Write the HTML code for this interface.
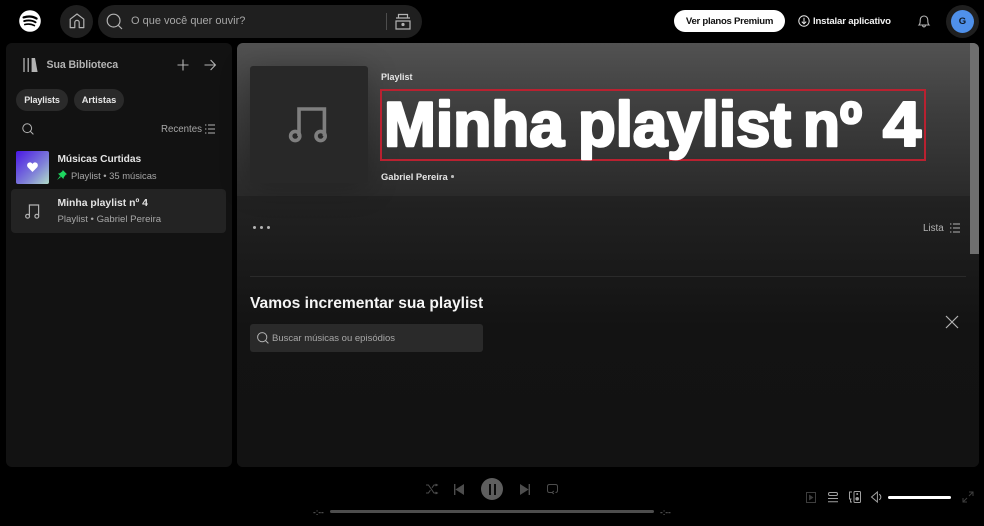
<!DOCTYPE html>
<html lang="pt-BR"><head><meta charset="utf-8"><title>Spotify</title>
<style>
html,body{margin:0;padding:0;background:#000;}
body{width:984px;height:526px;position:relative;overflow:hidden;font-family:"Liberation Sans",sans-serif;color:#fff;}
.a{position:absolute;}
.t{position:absolute;white-space:nowrap;line-height:1;}
svg{position:absolute;overflow:visible;}
</style></head><body>

<!-- top bar -->
<svg style="left:19px;top:10px" width="22" height="22" viewBox="0 0 22 22"><circle cx="11" cy="11" r="10.8" fill="#fff"/><path d="M4.6 7.4C9 6.1 14 6.4 17.6 8.6" stroke="#000" stroke-width="2.2" fill="none" stroke-linecap="round"/><path d="M5.2 11.1C9 10.1 13.4 10.4 16.6 12.3" stroke="#000" stroke-width="1.9" fill="none" stroke-linecap="round"/><path d="M5.8 14.5C9 13.7 12.6 14 15.4 15.6" stroke="#000" stroke-width="1.6" fill="none" stroke-linecap="round"/></svg>
<div class="a" style="left:60px;top:5px;width:33px;height:33px;border-radius:50%;background:#1f1f1f"></div>
<svg style="left:69px;top:13px" width="16" height="16" viewBox="0 0 16 16" fill="none" stroke="#b3b3b3" stroke-width="1.2"><path d="M1.2 14.6V6.2L8 1 14.8 6.2V14.6H10.2V9.4C10.2 8.2 9.2 7.4 8 7.4S5.8 8.2 5.8 9.4V14.6Z" stroke-linejoin="round"/></svg>
<div class="a" style="left:98px;top:5px;width:324px;height:33px;border-radius:17px;background:#1f1f1f"></div>
<svg style="left:106px;top:13px" width="17" height="17" viewBox="0 0 17 17" fill="none" stroke="#b3b3b3" stroke-width="1.2"><circle cx="7.6" cy="7.6" r="6.4"/><path d="M12.4 12.4L16 16"/></svg>
<div class="t" style="left:131px;top:16px;font-size:11px;color:#a7a7a7">O que você quer ouvir?</div>
<div class="a" style="left:386px;top:13px;width:1px;height:17px;background:#4d4d4d"></div>
<svg style="left:395px;top:13px" width="16" height="17" viewBox="0 0 16 17" fill="none" stroke="#b3b3b3" stroke-width="1.2"><path d="M3.5 5V1.5H12.5V5M1 5H15M1 8H15V16H1Z"/><circle cx="8" cy="11.5" r="1" fill="#b3b3b3"/></svg>

<div class="a" style="left:674px;top:10px;width:111px;height:22px;border-radius:11px;background:#fff"></div>
<div class="t" style="left:674px;top:16.5px;width:111px;text-align:center;font-size:9.6px;letter-spacing:-.28px;font-weight:bold;color:#111">Ver planos Premium</div>
<svg style="left:798px;top:15px" width="12" height="12" viewBox="0 0 12 12" fill="none" stroke="#e8e8e8" stroke-width="1"><circle cx="6" cy="6" r="5.2"/><path d="M6 2.8V8.6M3.8 6.6L6 8.8 8.2 6.6"/></svg>
<div class="t" style="left:813px;top:16.5px;font-size:9.6px;letter-spacing:-.17px;font-weight:bold;color:#f2f2f2">Instalar aplicativo</div>
<svg style="left:918px;top:15px" width="12" height="13" viewBox="0 0 12 13" fill="none" stroke="#b3b3b3" stroke-width="1.1"><path d="M1 10C2.4 8.6 2.2 7 2.2 5 2.2 2.6 3.8 1 6 1S9.8 2.6 9.8 5C9.8 7 9.6 8.6 11 10ZM4.6 10.4C4.6 12.4 7.4 12.4 7.4 10.4"/></svg>
<div class="a" style="left:946px;top:5px;width:33px;height:33px;border-radius:50%;background:#1f1f1f"></div>
<div class="a" style="left:951px;top:10px;width:23px;height:23px;border-radius:50%;background:#4f90ea"></div>
<div class="t" style="left:951px;top:17px;width:23px;text-align:center;font-size:9.5px;font-weight:bold;color:#0d1620">G</div>

<!-- sidebar -->
<div class="a" style="left:6px;top:43px;width:226px;height:424px;border-radius:6px;background:#121212"></div>
<svg style="left:23px;top:58px" width="15" height="14" viewBox="0 0 15 14"><path d="M1 0V14M5.2 0V14" stroke="#b3b3b3" stroke-width="1.3"/><path d="M8.6 0H12L14.6 14H8.6Z" fill="#b3b3b3"/></svg>
<div class="t" style="left:46.5px;top:60px;font-size:10.6px;letter-spacing:-.1px;font-weight:bold;color:#b3b3b3">Sua Biblioteca</div>
<svg style="left:177px;top:59px" width="12" height="12" viewBox="0 0 12 12" stroke="#b3b3b3" stroke-width="1.1"><path d="M6 .5V11.5M.5 6H11.5"/></svg>
<svg style="left:204px;top:59px" width="12" height="12" viewBox="0 0 12 12" fill="none" stroke="#b3b3b3" stroke-width="1.1"><path d="M.5 6H11.2M6.6 1L11.4 6 6.6 11"/></svg>

<div class="a" style="left:16px;top:89px;width:52px;height:22px;border-radius:11px;background:#2a2a2a"></div>
<div class="t" style="left:16px;top:96px;width:52px;text-align:center;font-size:9px;letter-spacing:-.1px;font-weight:bold;color:#e6e6e6">Playlists</div>
<div class="a" style="left:74px;top:89px;width:50px;height:22px;border-radius:11px;background:#2a2a2a"></div>
<div class="t" style="left:74px;top:96px;width:50px;text-align:center;font-size:9.3px;font-weight:bold;color:#e6e6e6">Artistas</div>

<svg style="left:22px;top:123px" width="12" height="12" viewBox="0 0 12 12" fill="none" stroke="#b3b3b3" stroke-width="1"><circle cx="5.2" cy="5.2" r="4.4"/><path d="M8.4 8.4L11.4 11.4"/></svg>
<div class="t" style="left:161px;top:125px;font-size:9.7px;color:#a7a7a7">Recentes</div>
<svg style="left:205px;top:124px" width="10" height="10" viewBox="0 0 10 10" stroke="#b3b3b3" stroke-width="1"><path d="M3 1H10M3 5H10M3 9H10M0 1H1.4M0 5H1.4M0 9H1.4"/></svg>

<div class="a" style="left:16px;top:151px;width:33px;height:33px;border-radius:2px;background:linear-gradient(135deg,#4a17e6,#7f80d8 60%,#b0dbc8)"></div>
<svg style="left:27px;top:162px" width="11" height="10" viewBox="0 0 11 10"><path d="M5.5 10L.8 5.2C-.6 3.6.2.6 2.8.4 4 .3 5 1 5.5 2 6 1 7 .3 8.2.4 10.8.6 11.6 3.6 10.2 5.2Z" fill="#fff"/></svg>
<div class="t" style="left:57.5px;top:155px;font-size:10.2px;letter-spacing:-.05px;font-weight:bold;color:#e4e4e4">Músicas Curtidas</div>
<svg style="left:57px;top:170px" width="10" height="10" viewBox="0 0 10 10"><path d="M5.8 0L10 4.2 8.8 4.6 6.8 7.4 6.4 9 1 3.6 2.8 3.2 5.4 1.2ZM3 6L0 10 4 7Z" fill="#1ed760"/></svg>
<div class="t" style="left:71px;top:171px;font-size:9.4px;color:#a7a7a7">Playlist • 35 músicas</div>

<div class="a" style="left:11px;top:189px;width:215px;height:44px;border-radius:4px;background:#232323"></div>
<svg style="left:25px;top:204px" width="15" height="15" viewBox="0 0 15 15" fill="none" stroke="#b3b3b3" stroke-width="1.2"><path d="M4.4 12V1H13.6V11.6"/><circle cx="2.6" cy="12.2" r="1.9"/><circle cx="11.8" cy="12.2" r="1.9"/></svg>
<div class="t" style="left:57.5px;top:199px;font-size:10.4px;font-weight:bold;color:#e4e4e4">Minha playlist nº 4</div>
<div class="t" style="left:57.5px;top:215px;font-size:9.6px;color:#a7a7a7">Playlist • Gabriel Pereira</div>

<!-- main -->
<div class="a" style="left:237px;top:43px;width:742px;height:424px;border-radius:6px;overflow:hidden;background:#121212">
  <div class="a" style="left:0;top:0;width:742px;height:153px;background:linear-gradient(#525252,#3d3d3d 45%,#2a2a2a)"></div>
  <div class="a" style="left:0;top:153px;width:742px;height:271px;background:linear-gradient(#222222,#131313 130px,#121212)"></div>
  <div class="a" style="left:733px;top:0;width:9px;height:211px;background:#6f6f6f"></div>
</div>
<div class="a" style="left:250px;top:66px;width:118px;height:117px;border-radius:3px;background:#282828;box-shadow:0 4px 30px rgba(0,0,0,.25)"></div>
<svg style="left:288px;top:107px" width="39" height="36" viewBox="0 0 39 36" fill="none" stroke="#7f7f7f" stroke-width="3.6"><path d="M11 29V2H36.4V29"/><circle cx="7.2" cy="29" r="4.6"/><circle cx="32.6" cy="29" r="4.6"/></svg>
<div class="t" style="left:381px;top:73px;font-size:9px;font-weight:bold;color:#e6e6e6">Playlist</div>
<div class="a" style="left:380px;top:89px;width:546px;height:72px;box-sizing:border-box;border:2px solid #b92130"></div>
<svg style="left:0;top:0" width="984" height="526"><g font-family="Liberation Sans" font-weight="bold" font-size="63" fill="#fff" stroke="#fff" stroke-width="2.6" stroke-linejoin="round">
<text x="384" y="146" textLength="180" lengthAdjust="spacingAndGlyphs">Minha</text>
<text x="578" y="146" textLength="213" lengthAdjust="spacingAndGlyphs">playlist</text>
<text x="803" y="146" textLength="59" lengthAdjust="spacingAndGlyphs">nº</text>
<text x="883" y="146" textLength="38" lengthAdjust="spacingAndGlyphs">4</text>
</g></svg>
<div class="t" style="left:381px;top:171.5px;font-size:9.4px;font-weight:bold;color:#e6e6e6">Gabriel Pereira</div>
<div class="a" style="left:451px;top:175px;width:2.5px;height:2.5px;border-radius:50%;background:#bbb"></div>

<div class="a" style="left:253px;top:226px;width:3px;height:3px;border-radius:50%;background:#b3b3b3"></div>
<div class="a" style="left:260px;top:226px;width:3px;height:3px;border-radius:50%;background:#b3b3b3"></div>
<div class="a" style="left:267px;top:226px;width:3px;height:3px;border-radius:50%;background:#b3b3b3"></div>

<div class="t" style="left:923px;top:224px;font-size:9.8px;color:#b3b3b3">Lista</div>
<svg style="left:950px;top:223px" width="10" height="10" viewBox="0 0 10 10" stroke="#b3b3b3" stroke-width="1"><path d="M3 1H10M3 5H10M3 9H10M0 1H1.4M0 5H1.4M0 9H1.4"/></svg>

<div class="a" style="left:250px;top:276px;width:716px;height:1px;background:#2a2a2a"></div>
<div class="t" style="left:250px;top:296px;font-size:15.6px;font-weight:bold;color:#f5f5f5">Vamos incrementar sua playlist</div>
<div class="a" style="left:250px;top:324px;width:233px;height:28px;border-radius:3px;background:#2a2a2a"></div>
<svg style="left:257px;top:332px" width="12" height="12" viewBox="0 0 12 12" fill="none" stroke="#b3b3b3" stroke-width="1"><circle cx="5.2" cy="5.2" r="4.6"/><path d="M8.6 8.6L11.4 11.4"/></svg>
<div class="t" style="left:272px;top:334px;font-size:9.5px;color:#a7a7a7">Buscar músicas ou episódios</div>
<svg style="left:945px;top:315px" width="14" height="14" viewBox="0 0 14 14" stroke="#b3b3b3" stroke-width="1.2"><path d="M1 1L13 13M13 1L1 13"/></svg>

<!-- player -->
<svg style="left:426px;top:484px" width="12" height="10" viewBox="0 0 12 10" fill="none" stroke="#4d4d4d" stroke-width="1"><path d="M0 1H2.4L8 9H10.6M0 9H2.4L4.4 6.2M6 3.8L8 1H10.6M9.6 0L11.4 1 9.6 2M9.6 8L11.4 9 9.6 10"/></svg>
<svg style="left:454px;top:484px" width="10" height="11" viewBox="0 0 10 11" fill="#4d4d4d"><path d="M0 0H1.4V11H0ZM10 0V11L1.4 5.5Z"/></svg>
<div class="a" style="left:481px;top:478px;width:22px;height:22px;border-radius:50%;background:#5e5e5e"></div>
<div class="a" style="left:488.5px;top:483.5px;width:2.4px;height:11px;background:#0b0b0b"></div>
<div class="a" style="left:493.5px;top:483.5px;width:2.4px;height:11px;background:#0b0b0b"></div>
<svg style="left:520px;top:484px" width="10" height="11" viewBox="0 0 10 11" fill="#4d4d4d"><path d="M10 0H8.6V11H10ZM0 0V11L8.6 5.5Z"/></svg>
<svg style="left:547px;top:484px" width="11" height="11" viewBox="0 0 11 11" fill="none" stroke="#4d4d4d" stroke-width="1"><path d="M6 8.5H2.5C1.2 8.5.5 7.6.5 6.5V2.5C.5 1.4 1.2.5 2.5.5H8.5C9.8.5 10.5 1.4 10.5 2.5V6.5C10.5 7.6 9.8 8.5 8.5 8.5M6.8 7L5.2 8.5 6.8 10"/></svg>
<div class="t" style="left:313px;top:507.5px;font-size:8.5px;color:#8a8a8a">-:--</div>
<div class="a" style="left:330px;top:510px;width:324px;height:3px;border-radius:2px;background:#4d4d4d"></div>
<div class="t" style="left:660px;top:507.5px;font-size:8.5px;color:#8a8a8a">-:--</div>

<svg style="left:806px;top:492px" width="10" height="11" viewBox="0 0 10 11" fill="none" stroke="#3e3e3e" stroke-width="1"><rect x=".5" y=".5" width="9" height="10"/><path d="M3.6 3.4L6.6 5.5 3.6 7.6Z" fill="#3e3e3e"/></svg>
<svg style="left:828px;top:492px" width="10" height="11" viewBox="0 0 10 11" fill="none" stroke="#a0a0a0" stroke-width="1"><rect x=".5" y=".5" width="9" height="3" rx="1.4"/><path d="M0 6.5H10M0 9.8H10"/></svg>
<svg style="left:849px;top:491px" width="12" height="12" viewBox="0 0 12 12" fill="none" stroke="#a0a0a0" stroke-width="1"><rect x="5" y=".5" width="6.5" height="11" rx="1"/><circle cx="8.2" cy="7.8" r="1.3" fill="#a0a0a0"/><circle cx="8.2" cy="3" r=".5" fill="#a0a0a0"/><path d="M3 1H.5V8H2.5M1.5 8V11H3"/></svg>
<svg style="left:871px;top:491px" width="12" height="12" viewBox="0 0 12 12" fill="none" stroke="#a0a0a0" stroke-width="1"><path d="M.5 6L6.4 1V11ZM8.2 3.2C10.4 4.6 10.4 7.4 8.2 8.8"/></svg>
<div class="a" style="left:888px;top:496px;width:63px;height:3px;border-radius:2px;background:#fff"></div>
<svg style="left:963px;top:492px" width="10" height="10" viewBox="0 0 10 10" fill="none" stroke="#3e3e3e" stroke-width="1"><path d="M6 4L10 0M6 0H10V4M4 6L0 10M0 6V10H4"/></svg>
</body></html>
